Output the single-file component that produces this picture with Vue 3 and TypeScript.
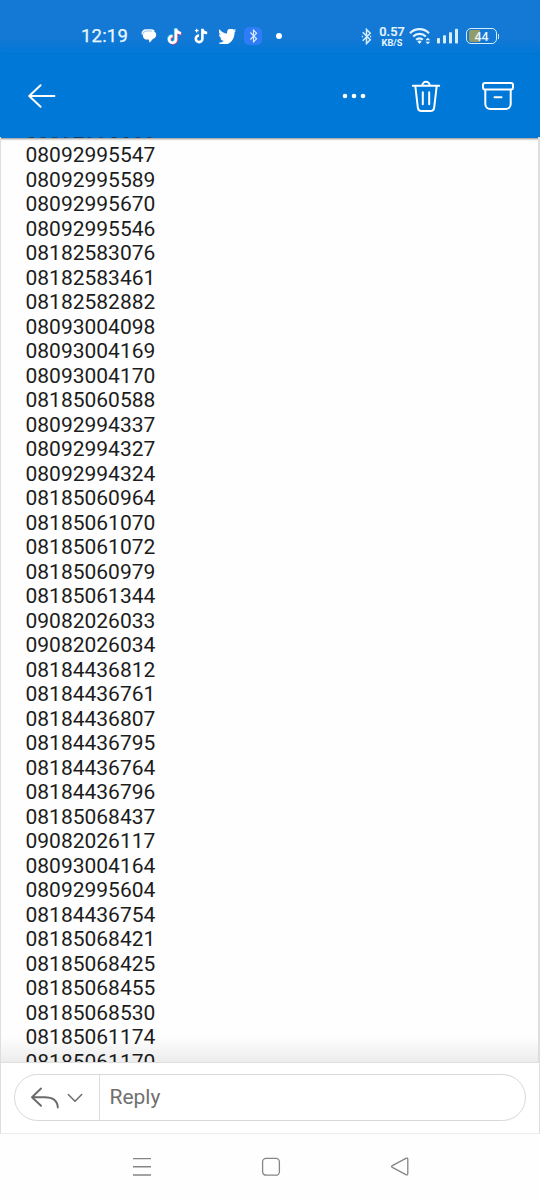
<script setup lang="ts">
const numbers: string[] = `08092995668 08092995547 08092995589 08092995670 08092995546 08182583076 08182583461 08182582882
08093004098 08093004169 08093004170 08185060588 08092994337 08092994327 08092994324 08185060964
08185061070 08185061072 08185060979 08185061344 09082026033 09082026034 08184436812 08184436761
08184436807 08184436795 08184436764 08184436796 08185068437 09082026117 08093004164 08092995604
08184436754 08185068421 08185068425 08185068455 08185068530 08185061174 08185061170`.split(/\s+/)

const note = 'M8.2 1.5v10a3.2 3.2 0 1 1-3.2-3.2M8.2 1.5c.4 2.8 2 4 4.8 4.2'
const bluetooth = 'M1 4.5l8 8-4 4V1.5l4 4-8 8'
</script>

<template>
  <div class="screen">
    <div class="status">
      <span class="time">12:19</span>
      <svg class="chat" width="16" height="16" viewBox="0 0 16 16">
        <path d="M6 3h5.2a3.9 3.9 0 0 1 4 3.9c0 2.5-2 3.4-3.6 4.3l-3 3.6-.9-3.2H6.2a4.2 4.2 0 0 1-4.4-4.3C1.8 4.8 3.5 3 6 3z" fill="#fff" />
        <path d="M.8 7C-.1 3.8 1.9 1.2 4.9 1.2h5c1.8 0 3.3.6 4 1.8" fill="#fff" />
        <path d="M1.4 7.2c.3-2.6 2-4.2 4.6-4.2h5" fill="none" stroke="#5da2e4" stroke-width=".7" />
      </svg>
      <svg class="tok" width="16" height="18" viewBox="0 0 15 17" fill="none" stroke-width="2.5">
        <path :d="note" stroke="#35d9e8" transform="translate(-.5 -.3)" />
        <path :d="note" stroke="#f34470" transform="translate(.9 .8)" />
        <path :d="note" stroke="#fff" transform="translate(.2 .2)" />
      </svg>
      <svg class="tok-lite" width="14" height="16" viewBox="0 0 14 16" fill="none" stroke="#fff">
        <path d="M8.4 .8v10a3.3 3.3 0 1 1-3.3-3.3M8.4 1c.4 2.8 2 3.8 4.8 4" stroke-width="2.6" />
        <path d="M2.7.8v3.6M.9 2.6h3.6" stroke-width="1.2" />
      </svg>
      <svg class="bird" width="17" height="15" viewBox="1 3 22.5 18" preserveAspectRatio="none" fill="#fff">
        <path d="M23.95 4.57a10 10 0 0 1-2.82.77 4.96 4.96 0 0 0 2.16-2.72c-.95.55-2 .95-3.13 1.18a4.92 4.92 0 0 0-8.38 4.48C7.69 8.1 4.07 6.13 1.64 3.16a4.93 4.93 0 0 0 1.52 6.57 4.9 4.9 0 0 1-2.23-.61v.06c0 2.38 1.7 4.37 3.95 4.82a5 5 0 0 1-2.21.09 4.94 4.94 0 0 0 4.6 3.42A9.87 9.87 0 0 1 0 19.54a13.99 13.99 0 0 0 7.56 2.21c9.05 0 14-7.5 14-13.98 0-.21 0-.42-.02-.63a9.94 9.94 0 0 0 2.41-2.57z" />
      </svg>
      <span class="bt-box">
        <svg width="9" height="14" viewBox="0 0 10 18" fill="none" stroke="#d9e9ff" stroke-width="1.5"><path :d="bluetooth" /></svg>
      </span>
      <i class="dot" />
      <svg class="bt" width="11" height="17" viewBox="0 0 10 18" fill="none" stroke="#d5eeff" stroke-width="1.6">
        <path :d="bluetooth" /><path d="M0 9h1.4M8.6 9H10" stroke-width="1.8" />
      </svg>
      <span class="speed"><b>0.57</b><small>KB/S</small></span>
      <svg class="wifi" width="23" height="19" viewBox="0 0 23 19" fill="none" stroke="#e1f4ff" stroke-width="2.2">
        <path d="M1 6.2c5.3-5.4 13.7-5.4 19 0M4.2 9.5c3.5-3.6 9.1-3.6 12.6 0M7.2 12.7c1.9-1.9 4.7-1.9 6.6 0" />
        <path d="M8.4 14.5l2.1 2.4 2.1-2.4a3 3 0 0 0-4.2 0z" fill="#e1f4ff" stroke="none" />
        <path d="M16.4 13.3l2.4-2.5 2.4 2.5zM16.4 14.8l2.4 2.5 2.4-2.5z" fill="#e1f4ff" stroke="none" />
      </svg>
      <svg class="signal" width="22" height="16" viewBox="0 0 22 16" fill="#d5edff">
        <rect x="0" y="10" width="3" height="5.5" rx=".8" /><rect x="6" y="7.3" width="3" height="8.2" rx=".8" />
        <rect x="12" y="4.2" width="3" height="11.3" rx=".8" /><rect x="18" y=".8" width="3" height="14.7" rx=".8" />
      </svg>
      <span class="battery"><i /><em>44</em></span>
      <i class="cap" />
    </div>

    <header class="bar">
      <svg class="back" width="30" height="26" viewBox="0 0 30 26" fill="none" stroke="#fff" stroke-width="2" stroke-linecap="round" stroke-linejoin="round">
        <path d="M13.6 2.2L2.2 13 13.6 23.8M2.4 13h25" />
      </svg>
      <svg class="more" width="24" height="6" viewBox="0 0 24 6" fill="#fff">
        <circle cx="3" cy="3" r="2.3" /><circle cx="12" cy="3" r="2.3" /><circle cx="21" cy="3" r="2.3" />
      </svg>
      <svg class="bin" width="30" height="34" viewBox="0 0 30 34" fill="none" stroke="#fff" stroke-width="2" stroke-linecap="round" stroke-linejoin="round">
        <path d="M1.8 6.8h26.4M11.3 6.5a3.7 3.7 0 0 1 7.4 0M4.3 7l2.5 21.3c.3 2.5 1.6 3.7 3.9 3.7h8.6c2.3 0 3.6-1.2 3.9-3.7L25.7 7M11.8 13.3v12M18.2 13.3v12" />
      </svg>
      <svg class="archive" width="32" height="28" viewBox="0 0 32 28" fill="none" stroke="#fff" stroke-width="2" stroke-linecap="round" stroke-linejoin="round">
        <rect x="1" y="1" width="30" height="6.6" rx="2" />
        <path d="M3.3 8v14a5 5 0 0 0 5 5h15.4a5 5 0 0 0 5-5V8M12.5 15.3h7" />
      </svg>
    </header>

    <main class="message">
      <div v-for="n in numbers" :key="n" class="row">{{ n }}</div>
      <div class="fade" />
    </main>

    <section class="composer">
      <div class="pill">
        <div class="mode">
          <svg width="28" height="22" viewBox="0 0 28 22" fill="none" stroke="#6b6b6b" stroke-width="1.9" stroke-linecap="round" stroke-linejoin="round">
            <path d="M10 1.5L1 10.2l9 8.6M1.3 10.2h12.2c8 0 13 3.5 13.3 10.3" />
          </svg>
          <svg class="chevron" width="16" height="10" viewBox="0 0 16 10" fill="none" stroke="#6b6b6b" stroke-width="1.5" stroke-linecap="round" stroke-linejoin="round"><path d="M1.3 1.5L8 8.2l6.7-6.7" /></svg>
        </div>
        <span class="hint">Reply</span>
      </div>
    </section>

    <nav class="system">
      <svg class="menu" width="20" height="20" viewBox="0 0 20 20" stroke="#858585" stroke-width="1.4"><path d="M1 1.6h18M1 9.8h18M1 18h18" /></svg>
      <svg class="home" width="20" height="20" viewBox="0 0 20 20" fill="none" stroke="#858585" stroke-width="1.3"><rect x="1.6" y="1.4" width="16.8" height="16.8" rx="3.5" /></svg>
      <svg width="20" height="20" viewBox="0 0 20 20" fill="none" stroke="#858585" stroke-width="1.3" stroke-linejoin="round"><path d="M2.3 8.6L15.9 1.4q1.9-.9 1.9 1v14.2q0 1.9-1.9 1L2.3 10.4q-1.5-.9 0-1.8z" /></svg>
    </nav>
  </div>
</template>

<style>
body { margin: 0; background: #fff; }
</style>

<style scoped>
.screen { width: 540px; height: 1200px; display: flex; flex-direction: column; overflow: hidden; background: #fefefe; font-family: Roboto, sans-serif; }
svg { display: block; flex: none; }
.status { height: 54px; padding: 18px 0 0 81px; box-sizing: border-box; display: flex; align-items: center; background: linear-gradient(#1478d5 70%, #0078d7); flex: none; }
.time { width: 60px; font-size: 18.5px; line-height: 36px; letter-spacing: .2px; -webkit-text-stroke: .25px #eaf8ff; color: #eaf8ff; }
.tok { margin-left: 10px; }
.tok-lite { margin-left: 11px; }
.bird { margin-left: 11px; }
.bt-box { width: 18px; height: 18px; margin-left: 8px; border-radius: 5px; background: #2f7cf6; display: flex; align-items: center; justify-content: center; flex: none; }
.dot { width: 6px; height: 6px; margin-left: 14px; border-radius: 50%; background: #fff; }
.bt { margin-left: 79px; }
.speed { width: 26px; margin-left: 7px; display: flex; flex-direction: column; align-items: center; color: #e5f6ff; }
.speed b { font-size: 12.8px; line-height: 12px; font-weight: 500; -webkit-text-stroke: .2px #e5f6ff; }
.speed small { font-size: 9.2px; line-height: 9px; font-weight: 700; }
.wifi { margin-left: 4px; }
.signal { margin-left: 5px; }
.battery { position: relative; width: 31px; height: 16px; box-sizing: border-box; margin-left: 7px; border: 1.5px solid #d5edff; border-radius: 5px; display: flex; align-items: center; justify-content: center; flex: none; }
.battery i { position: absolute; left: 2px; top: 1px; bottom: 1px; width: 11px; border-radius: 2px 0 0 2px; background: #939b69; }
.battery em { position: relative; font-size: 12.4px; line-height: 13px; font-style: normal; font-weight: 500; color: #e7f6ff; }
.cap { width: 1px; height: 5px; margin-left: 1px; background: #bfe1ff; }
.bar { height: 84px; padding: 0 26px 1px 27px; box-sizing: border-box; display: flex; align-items: center; background: #0078d7; box-shadow: 0 1px 2px #0007; position: relative; z-index: 1; flex: none; }
.more { margin-left: auto; }
.bin { margin-left: 45px; }
.archive { margin-left: 41px; }
.message { height: 925px; margin-top: -1px; padding: 0 24px; border: solid #dedede; border-width: 0 2px 0 1px; box-sizing: border-box; overflow: hidden; position: relative; z-index: 2; font-size: 21px; line-height: 24.5px; color: #1c1c1c; flex: none; }
.row { height: 24.5px; padding-left: .5px; }
.row:first-child { margin-top: -18.1px; opacity: .65; }
.fade { position: absolute; left: 0; right: 0; bottom: 0; height: 26px; background: linear-gradient(#0000, #00000012); }
.composer { height: 72px; padding: 11px 13px 0; box-sizing: border-box; border: solid #dedede; border-width: 1px 1px 1px 1px; border-bottom-color: #ececec; background: #fff; flex: none; }
.pill { height: 47px; box-sizing: border-box; border: 1px solid #d8d8d8; border-radius: 24px; display: flex; }
.mode { width: 85px; padding-left: 16px; box-sizing: border-box; border-right: 1px solid #dcdcdc; display: flex; align-items: center; }
.chevron { margin-left: 8px; }
.hint { padding-left: 9.5px; font-size: 21px; line-height: 45px; color: #707070; }
.system { height: 66px; padding-left: 132px; display: flex; align-items: center; flex: none; }
.home { margin: 0 109px; }
</style>
